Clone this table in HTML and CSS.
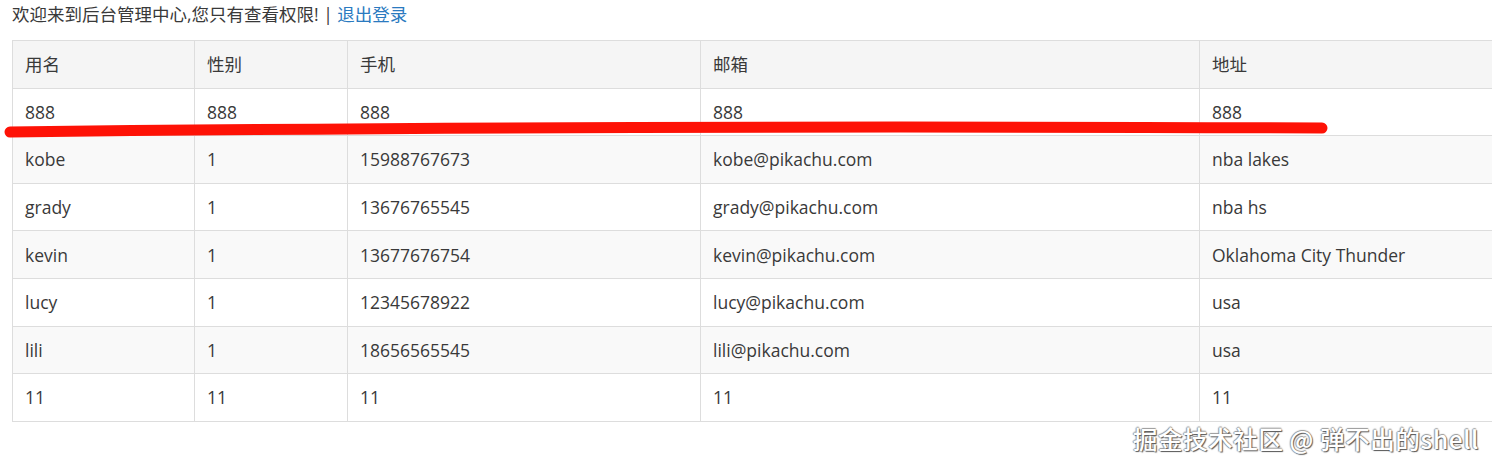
FILE: index.html
```html
<!DOCTYPE html>
<html lang="zh">
<head>
<meta charset="utf-8">
<title>后台管理中心</title>
<link rel="stylesheet" href="styles.css">
</head>
<body>
<div class="page">
  <p class="welcome">欢迎来到后台管理中心,您只有查看权限! | <a href="#" class="logout">退出登录</a></p>
  <div class="table-wrap">
    <table class="data">
      <colgroup>
        <col class="c1"><col class="c2"><col class="c3"><col class="c4"><col class="c5">
      </colgroup>
      <tbody>
        <tr><td>用名</td><td>性别</td><td>手机</td><td>邮箱</td><td>地址</td></tr>
        <tr><td>888</td><td>888</td><td>888</td><td>888</td><td>888</td></tr>
        <tr><td>kobe</td><td>1</td><td>15988767673</td><td>kobe@pikachu.com</td><td>nba lakes</td></tr>
        <tr><td>grady</td><td>1</td><td>13676765545</td><td>grady@pikachu.com</td><td>nba hs</td></tr>
        <tr><td>kevin</td><td>1</td><td>13677676754</td><td>kevin@pikachu.com</td><td>Oklahoma City Thunder</td></tr>
        <tr><td>lucy</td><td>1</td><td>12345678922</td><td>lucy@pikachu.com</td><td>usa</td></tr>
        <tr><td>lili</td><td>1</td><td>18656565545</td><td>lili@pikachu.com</td><td>usa</td></tr>
        <tr><td>11</td><td>11</td><td>11</td><td>11</td><td>11</td></tr>
      </tbody>
    </table>
  </div>
  <svg class="scribble" width="1340" height="150" viewBox="0 0 1340 150">
    <path d="M10 132 Q 600 125 1322 128" fill="none" stroke="#fe1206" stroke-width="11" stroke-linecap="round"/>
  </svg>
  <div class="watermark">掘金技术社区 @ 弹不出的shell</div>
</div>
</body>
</html>
```
FILE: styles.css
```css
html, body {
  margin: 0;
  padding: 0;
  overflow: hidden;
  background: #fff;
}
body {
  width: 1492px;
  height: 467px;
  font-family: "Open Sans", "Noto Sans CJK SC", sans-serif;
  font-size: 17.5px;
  color: #393939;
}
.page {
  position: relative;
  height: 467px;
  padding: 3px 0 0 12px;
  box-sizing: border-box;
}
.welcome {
  margin: 0 0 15px 0;
  line-height: 22px;
  white-space: nowrap;
}
.logout {
  color: #2a7ac0;
  text-decoration: none;
}
.table-wrap {
  width: 1480px;
  overflow: hidden;
}
.data {
  border-collapse: collapse;
  table-layout: fixed;
  width: 1588px;
}
.c1 { width: 182px; }
.c2 { width: 153px; }
.c3 { width: 353px; }
.c4 { width: 499px; }
.c5 { width: 401px; }
.data td {
  border: 1px solid #dddddd;
  height: 46.6px;
  padding: 0 12px;
  vertical-align: middle;
  line-height: 22px;
  white-space: nowrap;
}
.data tr:nth-child(odd) td {
  background: #f9f9f9;
}
.data tr:first-child td {
  background: #f5f5f5;
}
.scribble {
  position: absolute;
  left: 0;
  top: 0;
  pointer-events: none;
}
.watermark {
  position: absolute;
  right: 13px;
  top: 421px;
  font-family: "Noto Sans CJK SC", sans-serif;
  font-size: 24.5px;
  font-weight: 500;
  color: #ffffff;
  letter-spacing: 0.6px;
  text-shadow: 1px 1px 1px #555, -1px 0 1px #999, 0 -1px 1px #999;
  white-space: nowrap;
}
```
